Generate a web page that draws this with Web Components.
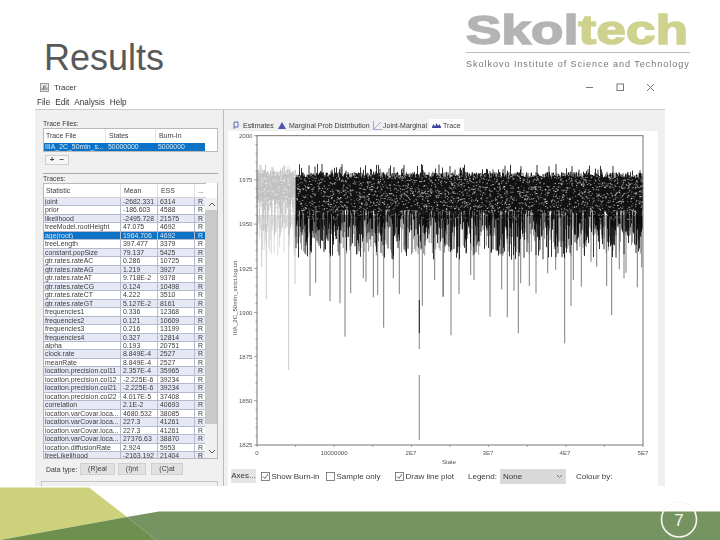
<!DOCTYPE html>
<html><head><meta charset="utf-8">
<style>
html,body{margin:0;padding:0;background:#fff}
body{width:720px;height:540px;overflow:hidden;font-family:"Liberation Sans",sans-serif}
</style></head>
<body>
<slide-page>
  <slide-logo slot="logo"></slide-logo>
  <tracer-window slot="main"></tracer-window>
  <slide-footer slot="footer" page="7"></slide-footer>
</slide-page>
<script>
class SlidePage extends HTMLElement{constructor(){super();this.attachShadow({mode:'open'}).innerHTML=`
<style>
:host{display:block;width:720px;height:540px;overflow:hidden;background:#fff}
header{height:78px;display:flex;justify-content:space-between;padding-left:44px}
h1{margin:36px 0 0;font:400 36px/44px "Liberation Sans",sans-serif;color:#595959}
main{height:409px;padding-left:35px}
</style>
<header><h1>Results</h1><slot name="logo"></slot></header>
<main><slot name="main"></slot></main>
<slot name="footer"></slot>`}}
customElements.define('slide-page',SlidePage);

class SlideLogo extends HTMLElement{constructor(){super();this.attachShadow({mode:'open'}).innerHTML=`
<style>
:host{display:block;width:254px;filter:blur(.35px)}
.word{height:41px;margin-top:9px;font:700 40px/42px "Liberation Sans",sans-serif;white-space:nowrap;transform:scaleX(1.32);transform-origin:0 0;-webkit-text-stroke:1.6px currentColor;letter-spacing:.2px}
.g{color:#b4b4b4}.t{color:#cfd28e}
hr{margin:2px 30px 0 0;border:0;border-top:1px solid #bdbdbd;height:0}
.sub{margin-top:6px;font:400 9.1px/11px "Liberation Sans",sans-serif;color:#777;letter-spacing:.94px;white-space:nowrap}
</style>
<div class="word"><span class="g">Skol</span><span class="t">tech</span></div>
<hr><div class="sub">Skolkovo Institute of Science and Technology</div>`}}
customElements.define('slide-logo',SlideLogo);

class TitleBar extends HTMLElement{constructor(){super();this.attachShadow({mode:'open'}).innerHTML=`
<style>
:host{display:flex;align-items:center;height:19px;background:#fff;padding-left:5px;color:#333}
svg{display:block}
.name{margin-left:5px;font-size:7.8px}
.btns{margin-left:auto;display:flex;align-items:center;padding-right:10px;gap:21px}
</style>
<svg width="9" height="9" viewBox="0 0 9 9"><rect x=".5" y=".5" width="8" height="8" fill="#e4e4e4" stroke="#9a9a9a"/><path d="M2 7V5M3.5 7V3M5 7V2M6.8 7V4.5" stroke="#777" stroke-width="1"/></svg>
<span class="name">Tracer</span>
<div class="btns">
<svg width="9" height="9" viewBox="0 0 9 9"><path d="M0 4.5H7" stroke="#777"/></svg>
<svg width="9" height="9" viewBox="0 0 9 9"><rect x="1" y="1" width="6.5" height="6.5" fill="none" stroke="#777"/></svg>
<svg width="9" height="9" viewBox="0 0 9 9"><path d="M1 1L8 8M8 1L1 8" stroke="#777" fill="none"/></svg>
</div>`}}
customElements.define('title-bar',TitleBar);

class MenuBar extends HTMLElement{constructor(){super();this.attachShadow({mode:'open'}).innerHTML=`
<style>
:host{display:flex;gap:5px;height:13px;padding-left:2px;background:#fff;font-size:8.2px;line-height:11px;color:#333;border-bottom:1px solid #c9c9c9;box-sizing:border-box}
</style>
<span>File</span><span>Edit</span><span>Analysis</span><span>Help</span>`}}
customElements.define('menu-bar',MenuBar);

const ROWS=[["joint","-2682.331","6314"],["prior","-186.603","4588"],["likelihood","-2495.728","21575"],["treeModel.rootHeight","47.075","4692"],["age(root)","1964.706","4692"],["treeLength","397.477","3379"],["constant.popSize","79.137","5425"],["gtr.rates.rateAC","0.286","10725"],["gtr.rates.rateAG","1.219","3927"],["gtr.rates.rateAT","9.718E-2","9378"],["gtr.rates.rateCG","0.124","10498"],["gtr.rates.rateCT","4.222","3510"],["gtr.rates.rateGT","5.127E-2","8161"],["frequencies1","0.336","12368"],["frequencies2","0.121","10609"],["frequencies3","0.216","13199"],["frequencies4","0.327","12814"],["alpha","0.193","20751"],["clock.rate","8.849E-4","2527"],["meanRate","8.849E-4","2527"],["location.precision.col11","2.357E-4","35965"],["location.precision.col12","-2.225E-6","39234"],["location.precision.col21","-2.225E-6","39234"],["location.precision.col22","4.017E-5","37408"],["correlation","2.1E-2","40693"],["location.varCovar.loca...","4680.532","38085"],["location.varCovar.loca...","227.3","41261"],["location.varCovar.loca...","227.3","41261"],["location.varCovar.loca...","27376.63","38870"],["location.diffusionRate","2.924","5953"],["treeLikelihood","-2163.192","21404"]];

class StatTable extends HTMLElement{constructor(){super();
const rows=ROWS.map((r,i)=>`<div class="row ${i==4?'sel':i%2==0?'alt':''}"><span>${r[0]}</span><span>${r[1]}</span><span>${r[2]}</span><span>R</span></div>`).join('');
this.attachShadow({mode:'open'}).innerHTML=`
<style>
:host{display:grid;grid-template-columns:162px 13px;width:175px;height:276px;box-sizing:border-box;overflow:hidden;border:1px solid #b9b9b9;border-width:0 1px 1px 1px;background:#fff;font-size:6.9px;color:#3b3b3b}
.t{margin-left:-1px}
.head,.row{display:grid;grid-template-columns:78px 37px 37px 10px}
.head{height:15px;align-items:center;border-top:1px solid #b9b9b9;border-bottom:1px solid #d4d4d4;box-sizing:border-box}
.head span{padding-left:3px;height:14px;line-height:14px;border-right:1px solid #e0e0e0;box-sizing:border-box}
.head span:last-child{border:0}
.row{height:8.47px;line-height:8.2px;box-sizing:border-box;border-bottom:.8px solid #b4bccb}
.row span{padding-left:2px;border-right:.8px solid #b4bccb;overflow:hidden;white-space:nowrap}
.row span:last-child{padding-left:3px;border-right:0}
.alt{background:#e6e9f5}
.sel{background:#0b72c6;color:#d8e8f5}
.sb{background:#f0f0f0;display:flex;flex-direction:column;align-items:center;margin:15px 0 0 -1px;height:260px}
.sb svg{display:block;flex:none;margin:3px 0}
.th{width:100%;height:214px;background:#c9c9c9;flex:none}
.tr{flex:1}
</style>
<div class="t"><div class="head"><span>Statistic</span><span>Mean</span><span>ESS</span><span>...</span></div>${rows}</div>
<div class="sb"><svg width="8" height="6" viewBox="0 0 8 6"><path d="M1 5L4 2L7 5" fill="none" stroke="#555"/></svg><div class="th"></div><div class="tr"></div><svg width="8" height="6" viewBox="0 0 8 6"><path d="M1 1L4 4L7 1" fill="none" stroke="#555"/></svg></div>`}}
customElements.define('stat-table',StatTable);

class LeftPanel extends HTMLElement{constructor(){super();this.attachShadow({mode:'open'}).innerHTML=`
<style>
:host{display:block;width:189px;background:#f0f0f0;box-sizing:border-box;padding:9px 0 0 8px;border-right:1px solid #bcbcbc;font-size:6.9px;color:#3b3b3b}
.lab{height:9px;line-height:9px}
.ft{width:175px;height:24px;outline:1px solid #b9b9b9;outline-offset:-1px;background:#fff}
.fh{display:grid;grid-template-columns:63px 50px 49px;height:15px;line-height:15px}
.fh span{padding-left:3px;border-right:1px solid #e4e4e4}
.fh span:last-child{border:0}
.fr{display:grid;grid-template-columns:63px 50px 49px;width:162px;height:8px;line-height:8px;background:#0b72c6;color:#d8e8f5}
.fr span{padding-left:2px;overflow:hidden;white-space:nowrap}
.pm{display:flex;justify-content:center;gap:5px;width:24px;height:10px;box-sizing:border-box;margin:3px 0 0 2px;border:1px solid #cfcfcf;background:#f6f6f6;font:700 8px/8px "Liberation Sans",sans-serif;color:#444}
.sep{width:175px;border-top:1px solid #a9a9a9;margin-top:8px}
.dt{display:flex;align-items:center;margin-top:4px;padding-left:3px;height:12px;white-space:nowrap}
.b{height:12px;line-height:12px;text-align:center;background:#e1e1e1;outline:1px solid #d0d0d0;outline-offset:-1px;box-sizing:border-box}
.box{margin-top:6px;width:177px;height:6px;margin-left:-2px;border:1px solid #c6c6c6;border-bottom:0;box-sizing:border-box}
</style>
<div class="lab">Trace Files:</div>
<div class="ft"><div class="fh"><span>Trace File</span><span>States</span><span>Burn-In</span></div>
<div class="fr"><span>IIIA_2C_50mln_s...</span><span>50000000</span><span>5000000</span></div></div>
<div class="pm"><span>+</span><span>−</span></div>
<div class="sep"></div>
<div class="lab">Traces:</div>
<stat-table></stat-table>
<div class="dt"><span style="width:34px">Data type:</span><span class="b" style="width:35px">(R)eal</span><span class="b" style="width:28px;margin-left:3px">(I)nt</span><span class="b" style="width:32px;margin-left:5px">(C)at</span></div>
<div class="box"></div>`}}
customElements.define('left-panel',LeftPanel);

class TracePlot extends HTMLElement{constructor(){super();
let s=20240611;const R=()=>{s=(s+0x6D2B79F5)|0;let t=Math.imul(s^(s>>>15),1|s);t=(t+Math.imul(t^(t>>>7),61|t))^t;return((t^(t>>>14))>>>0)/4294967296};
const L=257,RR=643,T=135.7,B=445,BI=296;
function cols(x0,x1,step,top,lowBase,lowVar,tipP,tip){let d='';
 for(let x=x0;x<x1;x+=step){
  let t=top+R()*6; if(R()<tipP)t=top-R()*tip;
  const l=lowBase+Math.pow(R(),1.9)*lowVar;
  d+=`M${x.toFixed(2)} ${t.toFixed(1)}V${l.toFixed(1)}`}
 return d}
function dots(x0,x1,y0,y1,n){let d='';for(let i=0;i<n;i++){const x=x0+R()*(x1-x0),y=y0+R()*(y1-y0);d+=`M${x.toFixed(1)} ${y.toFixed(1)}h${(.5+R()*.8).toFixed(1)}v${(R()*1.6-.8).toFixed(1)}`}return d}
let strandsB='';for(let x=L;x<BI;x+=.9){const len=Math.pow(R(),1.5)*36;strandsB+=`M${x.toFixed(1)} 215V${(222+len).toFixed(1)}`}
let strandsG='';for(let x=BI;x<RR;x+=1.1){const len=Math.pow(R(),1.5)*30;strandsG+=`M${x.toFixed(1)} 215V${(226+len).toFixed(1)}`}
const sp=[[255,408],[272,368],[315,424],[345,430],[360,530],[377,400],[415,355],[423,365],[445,412],[458,405],[476,503],[505,355],[523,402],[592,437],[629,360],[655,410]].map(p=>[225+p[0]/3,160+p[1]/3]);
const sp2=[[9,410],[33,526],[57,402],[92,345],[102,360],[150,470],[185,388],[202,472],[222,392],[235,520],[242,370],[268,378],[288,400],[323,340],[347,330],[374,550],[393,438],[400,360],[424,380],[453,305],[470,320],[500,378],[515,465],[538,328],[552,355],[558,338],[592,382],[605,322]].map(p=>[440+p[0]/3,160+p[1]/3]);
const spikes=sp.concat(sp2).map(p=>`M${p[0].toFixed(1)} 215V${p[1].toFixed(1)}`).join('');
let tk='';
for(let v=0;v<=35;v++){const y=T+(B-T)*v/35;tk+=`M${L} ${y.toFixed(1)}h${v%5==0?-3:-1.5}`}
for(let v=0;v<=10;v++){const x=L+(RR-L)*v/10;tk+=`M${x.toFixed(1)} ${B}v2`}
const yl=[[2000,T],[1975,T+44.2],[1950,T+88.4],[1925,T+132.6],[1900,T+176.8],[1875,T+221],[1850,T+265.2],[1825,B]];
const xl=[['0',257],['10000000',334],['2E7',411],['3E7',488],['4E7',565],['5E7',643]];
this.attachShadow({mode:'open'}).innerHTML=`
<style>:host{display:block;background:#fff;height:335px}svg{display:block}text{font-family:"Liberation Sans",sans-serif;font-size:6.1px;fill:#555}</style>
<svg width="430" height="335" viewBox="228 131 430 335">
<path d="${strandsB}" stroke="#cfcfcf" stroke-width=".7" fill="none"/>
<path d="M266.3 225V299M288.7 225V370M261.7 225V267M295 225V284" stroke="#c4c4c4" stroke-width=".9" fill="none"/>
<path d="${cols(L,BI,.5,169,200,38,.08,5)}" stroke="#bdbdbd" stroke-width=".8" fill="none"/>
<path d="${dots(L,BI,172,225,300)}" stroke="#e9e9e9" stroke-width=".8" fill="none"/>
<path d="${strandsG}" stroke="#777" stroke-width=".8" fill="none"/>
<path d="${spikes}" stroke="#666" stroke-width=".85" fill="none"/>
<path d="${cols(BI,RR,.5,172,210,50,.1,8)}" stroke="#000" stroke-width=".8" fill="none"/>
<path d="${dots(BI,RR,176,220,900)}" stroke="#8a8a8a" stroke-width=".8" fill="none"/>
<path d="${dots(BI,RR,175,212,1250)}" stroke="#fff" stroke-width=".65" fill="none" opacity=".9"/>
<path d="M419.3 235V349" stroke="#888" stroke-width="1"/><path d="M419.3 300V333" stroke="#222" stroke-width="1"/>
<path d="M419.3 375V440" stroke="#888" stroke-width="1"/>
<rect x="${L}" y="${T}" width="${RR-L}" height="${B-T}" fill="none" stroke="#666" stroke-width=".9"/>
<path d="${tk}" stroke="#777" stroke-width=".7" fill="none"/>
${yl.map(a=>`<text x="252.5" y="${(a[1]+2.2).toFixed(1)}" text-anchor="end">${a[0]}</text>`).join('')}
${xl.map(a=>`<text x="${a[1]}" y="454.5" text-anchor="middle">${a[0]}</text>`).join('')}
<text x="449" y="464" text-anchor="middle">State</text>
<text transform="translate(237 298) rotate(-90)" text-anchor="middle">IIIA_2C_50mln_strict.log.txt</text>
</svg>`}}
customElements.define('trace-plot',TracePlot);

class CheckBox extends HTMLElement{constructor(){super();const on=this.hasAttribute('checked');this.attachShadow({mode:'open'}).innerHTML=`
<style>:host{display:inline-flex;align-items:center;gap:1.5px;font-size:8px;color:#3b3b3b;white-space:nowrap}
svg{display:block;flex:none}</style>
<svg width="9" height="9" viewBox="0 0 9 9"><rect x=".5" y=".5" width="8" height="8" fill="#fff" stroke="#666" stroke-width=".8"/>${on?'<path d="M2 4.5L3.8 6.5L7 2" fill="none" stroke="#444" stroke-width=".8"/>':''}</svg><slot></slot>`}}
customElements.define('check-box',CheckBox);

class RightPanel extends HTMLElement{constructor(){super();this.attachShadow({mode:'open'}).innerHTML=`
<style>
:host{display:block;flex:1;background:#f0f0f0;padding:9px 7px 0 4px;font-size:7px;color:#3b3b3b}
.tabs{display:flex;height:12px;align-items:center;padding-left:5px}
.tab{display:flex;align-items:center;height:12px;white-space:nowrap;flex:none}
.tab svg{display:block;flex:none}
.tab.on{background:#fff;padding:0 3px 0 3px}
.bar{display:flex;align-items:center;height:20px;background:#fff;padding-left:3px;font-size:8px}
.ax{width:25px;height:14px;line-height:14px;text-align:center;background:#e4e4e4;margin-right:5px}
.sel{width:66px;height:15px;line-height:15px;background:#d9d9d9;margin:0 10px 0 2px;box-sizing:border-box;display:flex;justify-content:space-between;align-items:center;padding:0 3px}
</style>
<div class="tabs">
<div class="tab" style="width:45px;gap:4px"><svg width="6" height="9" viewBox="0 0 6 9"><path d="M1 8V1H5V6H1" fill="none" stroke="#5566bb" stroke-width="1"/></svg><span>Estimates</span></div>
<div class="tab" style="width:95px;gap:3px"><svg width="8" height="7" viewBox="0 0 8 7"><path d="M4 0L8 7H0Z" fill="#4a55b0"/></svg><span>Marginal Prob Distribution</span></div>
<div class="tab" style="width:56px;gap:1px"><svg width="9" height="9" viewBox="0 0 9 9"><path d="M.5 0V8.5H9M1 8L8 1" fill="none" stroke="#a8a8d8" stroke-width="1"/></svg><span>Joint-Marginal</span></div>
<div class="tab on" style="gap:2px"><svg width="9" height="6" viewBox="0 0 9 6"><path d="M0 5L1.5 2L3 4.5L4.5 1L6 4L7.5 2L9 5V6H0Z" fill="#3a44a0"/></svg><span>Trace</span></div>
</div>
<trace-plot></trace-plot>
<div class="bar">
<div class="ax">Axes...</div>
<check-box checked style="width:65px">Show Burn-in</check-box>
<check-box style="width:69px">Sample only</check-box>
<check-box checked style="width:73px">Draw line plot</check-box>
<span style="width:30px">Legend:</span>
<div class="sel"><span>None</span><svg width="7" height="5" viewBox="0 0 7 5"><path d="M1 1L3.5 3.5L6 1" fill="none" stroke="#777"/></svg></div>
<span>Colour by:</span>
</div>`}}
customElements.define('right-panel',RightPanel);

class TracerWindow extends HTMLElement{constructor(){super();this.attachShadow({mode:'open'}).innerHTML=`
<style>
:host{display:flex;flex-direction:column;width:630px;height:408px;font-family:"Liberation Sans",sans-serif;filter:blur(.35px);overflow:hidden}
.body{display:flex;flex:1;min-height:0}
</style>
<title-bar></title-bar><menu-bar></menu-bar>
<div class="body"><left-panel></left-panel><right-panel></right-panel></div>`}}
customElements.define('tracer-window',TracerWindow);

class SlideFooter extends HTMLElement{constructor(){super();this.attachShadow({mode:'open'}).innerHTML=`
<style>
:host{display:block;position:relative;height:53px}
svg{display:block}
.n{position:absolute;left:660px;top:16px;width:38px;height:36px;text-align:center;font:400 17px/36px "Liberation Sans",sans-serif;color:#f4f7ee}
</style>
<svg width="720" height="53" viewBox="0 487 720 53">
<path d="M0 487.5H89L127 517L0 540Z" fill="#cdd17c"/>
<path d="M0 540L127 517L156 540Z" fill="#6e8f4e"/>
<path d="M127 517L159 511.5H720V540H156Z" fill="#759462"/>
<circle cx="679" cy="519.5" r="17.5" fill="none" stroke="#f6f8f0" stroke-width="1.6"/>
</svg>
<div class="n">${this.getAttribute('page')||''}</div>`}}
customElements.define('slide-footer',SlideFooter);
</script>
</body></html>
